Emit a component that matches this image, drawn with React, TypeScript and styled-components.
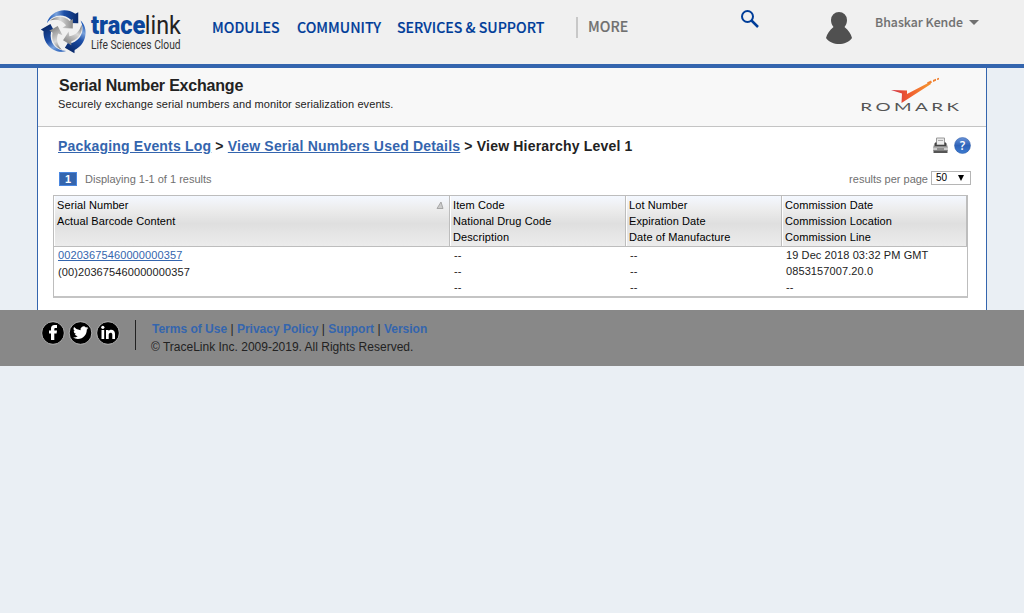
import React from "react";
import styled, { createGlobalStyle } from "styled-components";

const GlobalStyle = createGlobalStyle`
  body { margin: 0; background: #eaeff4; font-family: "Liberation Sans", Arial, sans-serif; font-size: 11px; color: #222; }
  * { box-sizing: border-box; }
`;

const Header = styled.header`
  display: flex;
  align-items: flex-start;
  height: 68px;
  padding-left: 39px;
  background: #f0f0f0;
  border-bottom: 4px solid #3465ae;
  font-family: "Noto Sans CJK SC", sans-serif;
`;
const Brand = styled.svg`
  flex: none;
  width: 145px;
  height: 60px;
  overflow: visible;
`;
const Nav = styled.nav`
  display: flex;
  align-items: flex-start;
  padding-top: 15px;
  margin-left: 28px;
  width: 528px;
`;
const NavItem = styled.a<{ $width: number }>`
  flex: none;
  width: ${(p) => p.$width}px;
  color: #003d99;
  font-size: 14.15px;
  font-weight: 500;
  line-height: 24px;
  white-space: nowrap;
  -webkit-text-stroke: 0.15px currentColor;
`;
const MoreItem = styled(NavItem)`
  height: 21px;
  margin-top: 2px;
  padding-left: 10px;
  line-height: 19px;
  color: #707070;
  border-left: 2px solid #c8c8c8;
`;
const SearchIcon = styled.svg`
  flex: none;
  width: 20px;
  height: 20px;
  margin-top: 9px;
`;
const Avatar = styled.svg`
  flex: none;
  width: 28px;
  height: 34px;
  margin: 11px 0 0 65px;
`;
const User = styled.div`
  display: flex;
  align-items: center;
  gap: 6px;
  height: 20px;
  margin: 12px 0 0 22px;
  color: #707070;
  font-size: 12.3px;
  font-weight: 500;
  white-space: nowrap;
  -webkit-text-stroke: 0.1px currentColor;
`;
const Caret = styled.i`
  margin-top: 1px;
  border: 5px solid transparent;
  border-top-color: #707070;
  border-bottom: 0;
`;

const Page = styled.main`
  width: 950px;
  height: 242px;
  margin-left: 37px;
  background: #fff;
  border: solid #3465ae;
  border-width: 0 1px;
`;
const TitleBar = styled.section`
  display: flex;
  justify-content: space-between;
  height: 59px;
  padding: 8px 25px 0 20px;
  background: #f8f8f8;
  border-bottom: 1px solid #c4c4c4;
`;
const Title = styled.h1`
  margin: 0 0 3px 1px;
  font-size: 16px;
  line-height: 19px;
  letter-spacing: -0.2px;
`;
const Subtitle = styled.p`
  margin: 0;
  line-height: 13px;
  letter-spacing: 0.09px;
`;
const Company = styled.svg`
  width: 100px;
  height: 36px;
  margin-top: 1px;
`;
const CrumbBar = styled.section`
  display: flex;
  justify-content: space-between;
  padding: 9px 15px 0 20px;
`;
const Crumbs = styled.div`
  font-size: 14px;
  font-weight: bold;
  line-height: 20px;
  letter-spacing: 0.195px;
`;
const Link = styled.a`
  color: #3465ae;
  text-decoration: underline;
`;
const Tools = styled.div`
  display: flex;
  gap: 5px;
  padding-top: 1px;
`;
const Icon = styled.svg`
  width: 17px;
  height: 17px;
`;
const Pager = styled.section`
  display: flex;
  align-items: center;
  height: 24px;
  margin-top: 11px;
  padding: 0 15px 0 21px;
  color: #707070;
`;
const PageNumber = styled.span`
  width: 18px;
  height: 14px;
  margin: 0 8px 0 0;
  background: #3465ae;
  border: 1px solid #4a87e0;
  color: #fff;
  font-weight: bold;
  line-height: 13px;
  text-align: center;
`;
const PerPage = styled.label`
  display: flex;
  align-items: center;
  gap: 3px;
  margin-left: auto;
`;
const Select = styled.span`
  display: flex;
  align-items: center;
  justify-content: space-between;
  width: 40px;
  height: 14px;
  margin-top: -3px;
  padding: 0 6px 0 4px;
  border: 1px solid #b5b5b5;
  color: #000;
  font-size: 10px;
  line-height: 12px;
`;
const SelectArrow = styled.i`
  border: 3.5px solid transparent;
  border-top: 6px solid #000;
  border-bottom: 0;
`;
const Table = styled.div`
  width: 915px;
  margin: 4px 0 0 15px;
  border: 1px solid #bdbdbd;
  border-bottom: 2px solid #c4c4c4;
  line-height: 16px;
  letter-spacing: 0.1px;
  white-space: nowrap;
`;
const Row = styled.div`
  display: grid;
  grid-template-columns: 396px 176px 156px 185px;
`;
const HeadCell = styled.div`
  display: flex;
  justify-content: space-between;
  height: 51px;
  padding: 1px 5px 0 3px;
  border: solid #bdbdbd;
  border-width: 0 1px 1px 0;
  box-shadow: inset 1px 0 #fff;
  background: linear-gradient(#f4f8ff 0%, #ececec 28%, #dfdfdf 55%, #ececec 100%);
  color: #000;
`;
const Cell = styled.div`
  height: 49px;
  padding-left: 4px;
`;
const SortArrow = styled.svg`
  width: 8px;
  height: 8px;
  margin-top: 4px;
`;
const Line = styled.div<{ $shift?: number }>`
  height: 16px;
  margin-top: ${(p) => p.$shift ?? 0}px;
`;

const Footer = styled.footer`
  display: flex;
  height: 56px;
  padding: 10px 0 0 40px;
  background: #888;
`;
const Socials = styled.svg`
  width: 82px;
  height: 27px;
`;
const Legal = styled.div`
  height: 30px;
  margin-left: 13px;
  padding-left: 15px;
  border-left: 1px solid #222;
  font-size: 12px;
  line-height: 18px;
`;
const FooterLinks = styled.div`
  padding-left: 1px;
  white-space: pre;
  a { color: #3465ae; font-weight: bold; }
`;
const Copyright = styled.div``;

const columns = [
  ["Serial Number", "Actual Barcode Content"],
  ["Item Code", "National Drug Code", "Description"],
  ["Lot Number", "Expiration Date", "Date of Manufacture"],
  ["Commission Date", "Commission Location", "Commission Line"],
];

const Tracelink = () => (
  <Brand viewBox="0 0 145 60">
    <defs>
      <linearGradient id="blue">
        <stop offset="0" stopColor="#0a49b0" />
        <stop offset=".3" stopColor="#7ba3dc" />
        <stop offset=".55" stopColor="#1d4fa8" />
        <stop offset="1" stopColor="#0a2a6b" />
      </linearGradient>
      <linearGradient id="silver">
        <stop offset="0" stopColor="#6e6e6e" />
        <stop offset=".45" stopColor="#d8d8d8" />
        <stop offset="1" stopColor="#8a8a8a" />
      </linearGradient>
    </defs>
    <g transform="translate(1.800 1.200) scale(.96)">
      {[0, 120, 240].map((angle) => (
        <g key={angle} transform={`rotate(${angle} 24.7 31.7)`}>
          <path fill="url(#blue)" d="M6.300 23C9 11.500 24 5 36 13L39 11.500 39 23 28.300 22.700 31.700 19.500C23 12 12.500 14 6.300 23Z" />
          <path fill="url(#silver)" d="M9.700 20C15 15 24 14.500 30 20.500L33.500 18.500 33.300 28.500 22.500 28 26.300 25C22.500 20 16.500 18 9.700 20Z" />
        </g>
      ))}
    </g>
    <g fontFamily="Roboto, sans-serif">
      <text transform="translate(52 34) scale(.87 1)" fontSize="26" fontWeight="900" fill="#0b469d" textLength="62.500" lengthAdjust="spacingAndGlyphs">trace</text>
      <text transform="translate(105.800 34) scale(.87 1)" fontSize="26" fill="#222" textLength="41.500" lengthAdjust="spacingAndGlyphs">link</text>
      <text transform="translate(52 49) scale(.87 1)" fontSize="12" fill="#333" textLength="103" lengthAdjust="spacingAndGlyphs">Life Sciences Cloud</text>
    </g>
  </Brand>
);

const Romark = () => (
  <Company viewBox="0 0 100 36">
    <defs>
      <linearGradient id="flame"><stop stopColor="#cf3040" /><stop offset=".45" stopColor="#f05a30" /><stop offset="1" stopColor="#f59a30" /></linearGradient>
    </defs>
    <path fill="url(#flame)" d="M30 13L46 13.500 46 17 69 5 70 7 40.500 26 41 16.500Z" />
    <path fill="#f08030" d="M66 5.500l4-2 1 2-4 2zM72 3l3-1.200v2L72 5zM76 1.500l2-.8v1.800l-2 .6z" />
    <text transform="translate(-.7 33.500) scale(1.800 1)" fontFamily="Lato, sans-serif" fontSize="10.500" fill="#555" textLength="54.800" lengthAdjust="spacing">ROMARK</text>
  </Company>
);

const Printer = () => (
  <Icon viewBox="0 0 17 17">
    <path fill="#e8e8e8" stroke="#999" d="M4.500 9V1h8v8" />
    <path stroke="#aaa" d="M6 3.500h5M6 5.500h5" />
    <path fill="#8c8c8c" d="M2.500 6h12l1.500 5v3H1v-3z" />
    <path fill="#444" d="M3 5.500h1.500V8h8V5.500H14V9H3z" />
    <path fill="#eee" d="M5 4h7v3.500H5z" />
    <path fill="#ccc" d="M1 10.500h15v3H1z" />
    <path fill="#555" d="M1.500 13.500h14V16h-14zM5 11.500h7v1H5z" />
  </Icon>
);

const Help = () => (
  <Icon viewBox="0 0 17 17">
    <defs><linearGradient id="help" x2="0" y2="1"><stop stopColor="#6a94d8" /><stop offset=".5" stopColor="#2e62b8" /><stop offset="1" stopColor="#3c7bd0" /></linearGradient></defs>
    <circle cx="8.500" cy="8.500" r="8" fill="url(#help)" stroke="#2b59a4" strokeWidth=".5" />
    <text x="8.500" y="12.700" textAnchor="middle" fontFamily="Open Sans, sans-serif" fontSize="12" fontWeight="600" fill="#fff">?</text>
  </Icon>
);

const SocialIcons = () => (
  <Socials viewBox="0 0 82 27">
    {[13, 40.500, 68].map((x) => (
      <circle key={x} cx={x} cy="13" r="11.300" fill="#000" stroke="#ccc" strokeWidth=".8" />
    ))}
    <path fill="#fff" d="M11 20v-6.500H9v-3h2V8.500C11 6.300 12.300 5 14.400 5H17v3h-1.500c-.8 0-1.200.4-1.200 1.100v1.400H17l-.4 3h-2.300V20z" />
    <path fill="#fff" transform="translate(33 5) scale(.64)" d="M23.950 4.570a10 10 0 0 1-2.820.77 4.960 4.960 0 0 0 2.160-2.720 9.900 9.900 0 0 1-3.120 1.190 4.920 4.920 0 0 0-8.380 4.480A13.900 13.900 0 0 1 1.670 3.150a4.920 4.920 0 0 0 1.520 6.570 4.900 4.900 0 0 1-2.230-.61v.06a4.920 4.920 0 0 0 3.950 4.820 5 5 0 0 1-2.210.09 4.940 4.940 0 0 0 4.600 3.420A9.870 9.870 0 0 1 0 19.540a14 14 0 0 0 7.550 2.210c9.050 0 14-7.500 14-13.980v-.64a9.900 9.900 0 0 0 2.400-2.560z" />
    <path fill="#fff" d="M61.500 10h2.700v9h-2.700zM66 10h2.600v1.200c1.600-2.400 6.400-1.700 6.400 2.600V19h-2.700v-4.300c0-2.900-3.600-2.500-3.600 0V19H66z" />
    <circle cx="62.800" cy="7.300" r="1.600" fill="#fff" />
  </Socials>
);

export default function App() {
  return (
    <>
      <GlobalStyle />
      <Header>
        <Tracelink />
        <Nav>
          <NavItem $width={85}>MODULES</NavItem>
          <NavItem $width={100}>COMMUNITY</NavItem>
          <NavItem $width={179}>SERVICES &amp; SUPPORT</NavItem>
          <MoreItem $width={70}>MORE</MoreItem>
        </Nav>
        <SearchIcon viewBox="0 0 20 20" fill="none" stroke="#003d99">
          <circle cx="7.500" cy="7.500" r="5.500" strokeWidth="2" />
          <path d="M11.500 11.500L18 18" strokeWidth="2.500" />
        </SearchIcon>
        <Avatar viewBox="0 0 28 34">
          <path fill="#505050" d="M14 1a8 8 0 0 1 8 8c0 3-1 5-2.500 7 4 3 6.500 7 7.500 11-6 8-20 8-26 0 1-4 3.500-8 7.500-11C7 14 6 12 6 9a8 8 0 0 1 8-8z" />
        </Avatar>
        <User>Bhaskar Kende<Caret /></User>
      </Header>
      <Page>
        <TitleBar>
          <div>
            <Title>Serial Number Exchange</Title>
            <Subtitle>Securely exchange serial numbers and monitor serialization events.</Subtitle>
          </div>
          <Romark />
        </TitleBar>
        <CrumbBar>
          <Crumbs>
            <Link>Packaging Events Log</Link> &gt; <Link>View Serial Numbers Used Details</Link> &gt; View Hierarchy Level 1
          </Crumbs>
          <Tools><Printer /><Help /></Tools>
        </CrumbBar>
        <Pager>
          <PageNumber>1</PageNumber>
          <span>Displaying 1-1 of 1 results</span>
          <PerPage>results per page<Select>50<SelectArrow /></Select></PerPage>
        </Pager>
        <Table>
          <Row>
            {columns.map((lines, i) => (
              <HeadCell key={lines[0]}>
                <div>{lines.map((text) => <Line key={text}>{text}</Line>)}</div>
                {i === 0 && (
                  <SortArrow viewBox="0 0 8 8"><path d="M1 7.500L5 1 7 7.500z" fill="#ccc" stroke="#999" strokeWidth=".8" /></SortArrow>
                )}
              </HeadCell>
            ))}
          </Row>
          <Row>
            <Cell>
              <Line><Link>00203675460000000357</Link></Line>
              <Line $shift={1}>(00)203675460000000357</Line>
            </Cell>
            <Cell><Line>--</Line><Line>--</Line><Line>--</Line></Cell>
            <Cell><Line>--</Line><Line>--</Line><Line>--</Line></Cell>
            <Cell><Line>19 Dec 2018 03:32 PM GMT</Line><Line>0853157007.20.0</Line><Line>--</Line></Cell>
          </Row>
        </Table>
      </Page>
      <Footer>
        <SocialIcons />
        <Legal>
          <FooterLinks><a>Terms of Use</a> | <a>Privacy Policy</a> | <a>Support</a> | <a>Version</a></FooterLinks>
          <Copyright>© TraceLink Inc. 2009-2019. All Rights Reserved.</Copyright>
        </Legal>
      </Footer>
    </>
  );
}
